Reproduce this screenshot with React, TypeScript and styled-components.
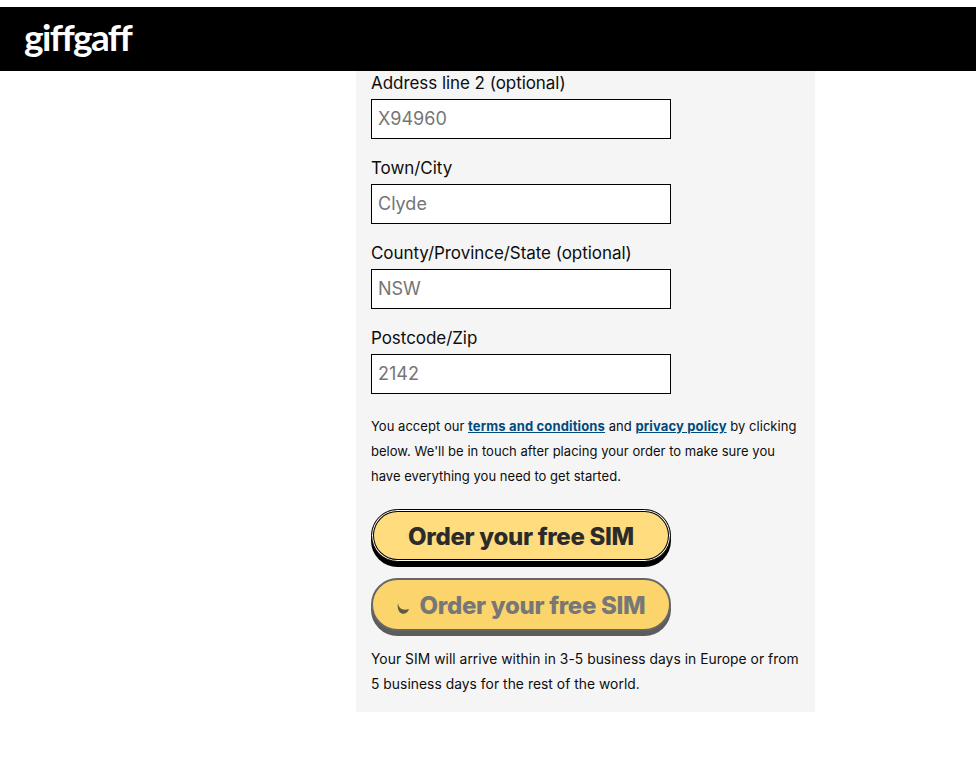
import styled, { createGlobalStyle } from "styled-components";

const GlobalStyle = createGlobalStyle`
  * {
    box-sizing: border-box;
  }
  body {
    margin: 0;
    padding-top: 7px;
    background: #fff;
    color: #0d0d0d;
    font-family: "Inter", "Noto Sans", sans-serif;
  }
`;

const Header = styled.header`
  height: 64px;
  background: #000;
  padding: 8px 0 0 24px;
`;

const Logo = styled.div`
  color: #fff;
  font-family: "Lato", sans-serif;
  font-size: 37px;
  font-weight: 700;
  line-height: 44px;
  letter-spacing: -1.6px;
`;

const Panel = styled.main`
  width: 459px;
  margin-left: 356px;
  padding: 0 15px 15px;
  background: #f5f5f5;
`;

const Field = styled.div`
  margin-bottom: 17px;
`;

const Label = styled.label`
  display: block;
  height: 28px;
  font-size: 17px;
  line-height: 25px;
  letter-spacing: -0.05px;
`;

const Input = styled.input`
  display: block;
  width: 300px;
  height: 40px;
  padding: 0 6px 2px;
  border: 1px solid #000;
  border-radius: 0;
  background: #fff;
  font-family: inherit;
  font-size: 18px;
  &::placeholder {
    color: #757575;
    opacity: 1;
  }
`;

const Terms = styled.p`
  margin: 20px 0 20px;
  font-size: 13px;
  line-height: 25px;
  letter-spacing: 0.03px;
`;

const TermsLink = styled.a`
  color: #004b7c;
  font-weight: 700;
  letter-spacing: 0.15px;
  text-decoration: underline;
`;

const OrderButton = styled.button<{ $busy?: boolean }>`
  display: flex;
  align-items: center;
  justify-content: center;
  gap: 10px;
  width: 300px;
  height: 53px;
  margin-bottom: 16px;
  padding: 2px 0 0;
  border: ${(p) => (p.$busy ? "2px solid #666" : "1px solid #000")};
  border-radius: 27px;
  background: ${(p) => (p.$busy ? "#fbd46c" : "#ffdc7e")};
  box-shadow: ${(p) =>
    p.$busy
      ? "0 5px 0 #5c5c5c"
      : "inset 0 0 0 1px #fff, inset 0 0 0 2px #000, 0 5px 0 #000"};
  color: ${(p) => (p.$busy ? "#777" : "#2b2b2b")};
  font-family: inherit;
  font-size: 24px;
  font-weight: 800;
  letter-spacing: -0.3px;
`;

const Spinner = styled.svg`
  width: 13px;
  height: 13px;
  margin-top: 5px;
`;

const Note = styled.p`
  margin: 0;
  font-size: 13.8px;
  line-height: 25px;
  letter-spacing: 0.05px;
`;

const fields = [
  { label: "Address line 2 (optional)", placeholder: "X94960" },
  { label: "Town/City", placeholder: "Clyde" },
  { label: "County/Province/State (optional)", placeholder: "NSW" },
  { label: "Postcode/Zip", placeholder: "2142" },
];

export default function App() {
  return (
    <>
      <GlobalStyle />
      <Header>
        <Logo>giffgaff</Logo>
      </Header>
      <Panel>
        {fields.map((field) => (
          <Field key={field.label}>
            <Label>{field.label}</Label>
            <Input placeholder={field.placeholder} />
          </Field>
        ))}
        <Terms>
          You accept our <TermsLink href="#">terms and conditions</TermsLink>{" "}
          and <TermsLink href="#">privacy policy</TermsLink> by clicking below.
          We'll be in touch after placing your order to make sure you have
          everything you need to get started.
        </Terms>
        <OrderButton>Order your free SIM</OrderButton>
        <OrderButton $busy>
          <Spinner viewBox="0 0 13 13">
            <path d="M1 1 C1.5 6.5 6 9 12 7 C11 11 7.5 12.5 4.5 11.5 C1.5 10 0 6 1 1 Z" fill="#5f5a45" />
          </Spinner>
          Order your free SIM
        </OrderButton>
        <Note>
          Your SIM will arrive within in 3-5 business days in Europe or from 5
          business days for the rest of the world.
        </Note>
      </Panel>
    </>
  );
}
